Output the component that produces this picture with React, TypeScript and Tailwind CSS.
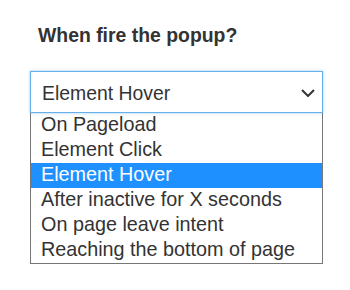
import React from 'react';

const options = [
  'On Pageload',
  'Element Click',
  'Element Hover',
  'After inactive for X seconds',
  'On page leave intent',
  'Reaching the bottom of page',
];

const selected = 'Element Hover';

export default function App() {
  return (
    <div
      className="w-[350px] h-[290px] bg-white text-[#333333]"
      style={{ fontFamily: '"Liberation Sans", Arial, sans-serif' }}
    >
      <div className="pl-[38px] pt-[24px] text-[19.4px] font-bold leading-[22px]">When fire the popup?</div>

      <div className="mt-[25px] ml-[30px] w-[293px]">
        {/* Select trigger (focused) */}
        <div className="h-[42px] border border-[#66afe9] shadow-[0_0_3px_rgba(102,175,233,0.6)] flex items-center justify-between pl-[11px] pr-[7px]">
          <span className="text-[19.4px] leading-[40px] pt-[1px]">{selected}</span>
          <svg width="14" height="8" viewBox="0 0 14 8" fill="none" className="mt-[2px]">
            <polyline points="1,1 7,7 13,1" stroke="#333333" strokeWidth="2" />
          </svg>
        </div>

        {/* Open option list */}
        <ul className="border border-t-0 border-[#767676]">
          {options.map(o => (
            <li
              key={o}
              className={
                'h-[25px] pl-[10px] text-[19.8px] leading-[23px] whitespace-nowrap ' +
                (o === selected ? 'bg-[#1e90ff] text-white' : '')
              }
            >
              {o}
            </li>
          ))}
        </ul>
      </div>
    </div>
  );
}
